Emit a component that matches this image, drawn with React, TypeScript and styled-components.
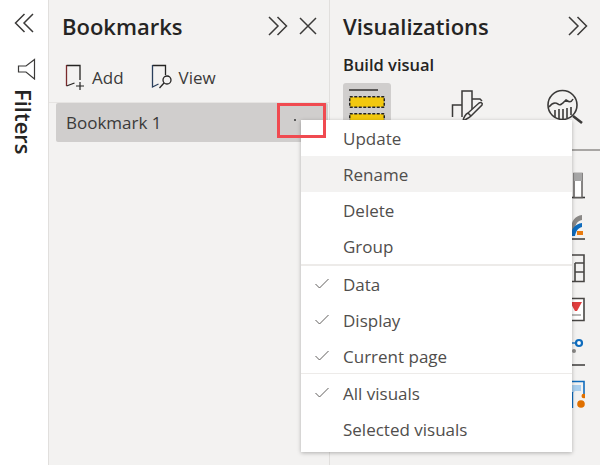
import React from "react";
import styled, { createGlobalStyle } from "styled-components";

const Global = createGlobalStyle`
  html, body { margin: 0; padding: 0; background: #f3f2f1; }
  body { font-family: "Open Sans", "Noto Sans", "Liberation Sans", sans-serif; }
  * { box-sizing: border-box; }
`;

const Page = styled.div`
  position: relative;
  width: 600px;
  height: 465px;
  display: flex;
  overflow: hidden;
  color: #252423;
`;

const FiltersRail = styled.aside`
  width: 49px;
  flex: none;
  background: #fff;
  border-right: 1px solid #e1dfdd;
  display: flex;
  flex-direction: column;
  align-items: center;
  padding-top: 13px;
`;

const RailIcon = styled.svg`
  display: block;
  flex: none;
`;

const FilterGroup = styled.div`
  margin-top: 25px;
  display: flex;
  flex-direction: column;
  align-items: center;
  gap: 9px;
`;

const VerticalLabel = styled.span`
  writing-mode: vertical-rl;
  font-size: 22px;
  font-weight: 600;
  line-height: 24px;
`;

const BookmarksPane = styled.section`
  width: 281px;
  flex: none;
  border-right: 1px solid #e1dfdd;
  display: flex;
  flex-direction: column;
`;

const PaneHeader = styled.header`
  height: 52px;
  display: flex;
  align-items: center;
  gap: 11px;
  padding: 0 12px 0 13px;
`;

const PaneTitle = styled.h2`
  margin: 0;
  flex: 1;
  font-size: 22px;
  font-weight: 600;
  line-height: 28px;
  color: #252423;
`;

const Toolbar = styled.div`
  height: 51px;
  display: flex;
  align-items: center;
  gap: 27px;
  padding: 0 0 0 16px;
  border-bottom: 1px solid #e6e4e2;
`;

const ToolButton = styled.div`
  display: flex;
  align-items: center;
  gap: 7px;
  font-size: 17px;
  color: #3b3a39;
`;

const BookmarkRow = styled.div`
  height: 39px;
  margin: 0 1px 0 7px;
  background: #d0cecd;
  border-radius: 2px;
  display: flex;
  align-items: center;
  justify-content: space-between;
  padding: 0 28px 0 10px;
  font-size: 17px;
  color: #3b3a39;
`;

const Dots = styled.span`
  width: 2px;
  height: 2px;
  background: #333;
  border-radius: 50%;
  margin-right: 4px;
  margin-top: -6px;
`;

const VizPane = styled.section`
  flex: 1;
  min-width: 0;
  display: flex;
  flex-direction: column;
`;

const SubTitle = styled.div`
  font-size: 16.5px;
  font-weight: 600;
  line-height: 22px;
  padding: 0 13px;
  margin-top: 2px;
`;

const BuildTabs = styled.div`
  margin-top: 7px;
  padding: 0 10px 0 13px;
  height: 68px;
  display: flex;
  justify-content: space-between;
  align-items: flex-start;
  border-bottom: 2px solid #a8a6a4;
`;

const BuildTab = styled.div<{ $active?: boolean; $top: number }>`
  width: 48px;
  height: 66px;
  flex: none;
  border-radius: 3px;
  background: ${(p) => (p.$active ? "#d0cecd" : "transparent")};
  display: flex;
  justify-content: center;
  padding-top: ${(p) => p.$top}px;
`;

const Gallery = styled.div`
  display: flex;
  flex-direction: column;
  align-items: flex-end;
  gap: 12px;
  padding: 19px 15px 0 0;
`;

const Menu = styled.div`
  position: absolute;
  left: 301px;
  top: 120px;
  width: 271px;
  height: 332px;
  background: #fff;
  box-shadow: 0 1px 4px rgba(0, 0, 0, 0.28);
`;

const MenuItem = styled.div<{ $hover?: boolean }>`
  height: 36px;
  display: flex;
  align-items: center;
  padding-left: 42px;
  position: relative;
  font-size: 17px;
  color: #504e4c;
  background: ${(p) => (p.$hover ? "#f3f2f1" : "transparent")};
`;

const Check = styled.svg`
  position: absolute;
  left: 14px;
  top: 12px;
`;

const Divider = styled.div<{ $thick?: boolean }>`
  height: ${(p) => (p.$thick ? "2px" : "1px")};
  margin-top: ${(p) => (p.$thick ? "0" : "-1px")};
  margin-bottom: ${(p) => (p.$thick ? "0" : "1px")};
  background: #edebe9;
`;

const Highlight = styled.div`
  position: absolute;
  left: 277px;
  top: 103px;
  width: 49px;
  height: 35px;
  border: 3px solid #f04a50;
  pointer-events: none;
`;

const ChevronsLeft = () => (
  <RailIcon width="20" height="20" viewBox="0 0 20 20" fill="none" stroke="#3b3a39" strokeWidth="1.5">
    <path d="M10.5 1 1.5 10l9 9M19 1l-9 9 9 9" />
  </RailIcon>
);

const ChevronsRight = () => (
  <RailIcon width="20" height="20" viewBox="0 0 20 20" fill="none" stroke="#3b3a39" strokeWidth="1.5">
    <path d="M1 1l9 9-9 9M9.5 1l9 9-9 9" />
  </RailIcon>
);

const FilterIcon = () => (
  <RailIcon width="24" height="22" viewBox="0 0 24 22" fill="none" stroke="#3b3a39" strokeWidth="1.2">
    <path d="M22.5 1.5V21L14 14H6.5V8H14Z" />
  </RailIcon>
);

const CloseIcon = () => (
  <RailIcon width="18" height="18" viewBox="0 0 18 18" fill="none" stroke="#3b3a39" strokeWidth="1.5">
    <path d="M1 1 17 17M17 1 1 17" />
  </RailIcon>
);

const AddIcon = () => (
  <RailIcon width="20" height="26" viewBox="0 0 20 26" fill="none">
    <path d="M1.5 1.5H15V16M1.5 22l8-3" stroke="#252423" strokeWidth="1.3" />
    <path d="M1.5 1v21" stroke="#7a2a2c" strokeWidth="1.3" />
    <path d="M15 18v8M11 22h8" stroke="#252423" strokeWidth="1.2" />
  </RailIcon>
);

const ViewIcon = () => (
  <RailIcon width="21" height="26" viewBox="0 0 21 26" fill="none">
    <path d="M1.5 1.5h13V11" stroke="#252423" strokeWidth="1.3" />
    <path d="M1.5 1v22l6-3" stroke="#2a3f5c" strokeWidth="1.3" />
    <circle cx="16" cy="16" r="4" stroke="#252423" strokeWidth="1.3" />
    <path d="M13 19 8.5 24" stroke="#252423" strokeWidth="1.3" />
  </RailIcon>
);

const BuildIcon = () => (
  <RailIcon width="36" height="50" viewBox="0 0 36 50">
    <path d="M0 3h29" stroke="#3b3a39" strokeWidth="1.6" />
    <rect x="1" y="10" width="34" height="10" fill="#f2c80f" />
    <rect x="0.75" y="9.75" width="34.5" height="10.5" fill="none" stroke="#252423" strokeWidth="1.5" strokeDasharray="3 1.5" />
    <rect x="1" y="27" width="34" height="10" fill="#f2c80f" />
    <rect x="0.75" y="26.75" width="34.5" height="10.5" fill="none" stroke="#252423" strokeWidth="1.5" strokeDasharray="3 1.5" />
  </RailIcon>
);

const FormatIcon = () => (
  <RailIcon width="36" height="36" viewBox="0 0 36 36" fill="none" stroke="#3b3a39" strokeWidth="1.5">
    <path d="M3.5 28V16H13M13 28V2h10v24M23 10h8l2 2" />
    <path d="M14 32c1-5 3-7 5-8l11-10c2-1 4 0 3 2L22 27c-2 2-5 3-8 5Z" fill="#f3f2f1" />
    <path d="M22 27l-3-3" />
  </RailIcon>
);

const AnalyticsIcon = () => (
  <RailIcon width="38" height="38" viewBox="0 0 38 38" fill="none" stroke="#3b3a39" strokeWidth="1.6">
    <circle cx="15.5" cy="16" r="14.5" />
    <path d="M2 18c3-4 6-5 9-3 2 2 4 0 8-4 3 2 5 3 7-1" />
    <path d="M8 21v7M12 20v10M16 20v10M20 19v10M24 18v8" />
    <path d="M26 27 35 34" strokeWidth="2.6" />
  </RailIcon>
);

const IconSvg = styled.svg`
  display: block;
  flex: none;
`;

const Tile = ({ children }: { children: React.ReactNode }) => (
  <IconSvg width="30" height="30" viewBox="0 0 30 30" fill="none">
    {children}
  </IconSvg>
);

const CheckMark = () => (
  <Check width="14" height="12" viewBox="0 0 14 12" fill="none" stroke="#605e5c" strokeWidth="1">
    <path d="M0.5 6l4 4 9-9" />
  </Check>
);

export default function App() {
  return (
    <Page>
      <Global />
      <FiltersRail>
        <ChevronsLeft />
        <FilterGroup>
          <FilterIcon />
          <VerticalLabel>Filters</VerticalLabel>
        </FilterGroup>
      </FiltersRail>

      <BookmarksPane>
        <PaneHeader>
          <PaneTitle>Bookmarks</PaneTitle>
          <ChevronsRight />
          <CloseIcon />
        </PaneHeader>
        <Toolbar>
          <ToolButton>
            <AddIcon />
            Add
          </ToolButton>
          <ToolButton>
            <ViewIcon />
            View
          </ToolButton>
        </Toolbar>
        <BookmarkRow>
          Bookmark 1
          <Dots />
        </BookmarkRow>
      </BookmarksPane>

      <VizPane>
        <PaneHeader>
          <PaneTitle>Visualizations</PaneTitle>
          <ChevronsRight />
        </PaneHeader>
        <SubTitle>Build visual</SubTitle>
        <BuildTabs>
          <BuildTab $active $top={4}>
            <BuildIcon />
          </BuildTab>
          <BuildTab $top={6}>
            <FormatIcon />
          </BuildTab>
          <BuildTab $top={6}>
            <AnalyticsIcon />
          </BuildTab>
        </BuildTabs>
        <Gallery>
          <Tile>
            <path d="M15 27.5h15" stroke="#3b3a39" strokeWidth="1.6" />
            <rect x="19" y="3.5" width="8" height="24" fill="#fff" stroke="#605e5c" strokeWidth="1.5" />
            <rect x="19" y="3" width="8" height="8" fill="#a6a6a6" />
          </Tile>
          <Tile>
            <path d="M16 18c0-9 4-14 11-15v5c-5 1-7 5-7 10Z" fill="#8a8886" />
            <path d="M16 24c0-7 4-12 11-13v4c-4 1-6 4-7 9Z" fill="#0f6cbd" />
            <rect x="22" y="19" width="6" height="4" fill="#e97b0f" />
            <path d="M16 27h14" stroke="#3b3a39" strokeWidth="1.5" />
          </Tile>
          <Tile>
            <path d="M15 1h14v26.5H15M20 9v18.5M20 9h9M20 18h9" stroke="#484644" strokeWidth="1.6" />
          </Tile>
          <Tile>
            <path d="M15 2.5h14v22H15" stroke="#484644" strokeWidth="1.6" fill="#fff" />
            <path d="M15 6h12l-5 9h-2Z" fill="#e03e3e" />
            <path d="M15 19h11" stroke="#8a8886" strokeWidth="1.2" />
          </Tile>
          <Tile>
            <circle cx="24" cy="5" r="3" fill="#fff" stroke="#0f6cbd" strokeWidth="2.2" />
            <path d="M16 5h6" stroke="#0f6cbd" strokeWidth="1.4" />
            <circle cx="19" cy="13" r="2" fill="#8a8886" />
            <path d="M16 27h14" stroke="#3b3a39" strokeWidth="1.5" />
          </Tile>
          <Tile>
            <path d="M14 1.5h15V14" stroke="#0f6cbd" strokeWidth="1.6" />
            <path d="M14 5h12v6h-6l-3 3h-3Z" fill="#a9cfee" />
            <path d="M17.5 12v16" stroke="#0f6cbd" strokeWidth="1.4" />
            <circle cx="28.7" cy="16" r="2.2" fill="#e07000" />
            <circle cx="26" cy="24" r="3.8" fill="#e07000" />
          </Tile>
        </Gallery>
      </VizPane>

      <Menu>
        <MenuItem>Update</MenuItem>
        <MenuItem $hover>Rename</MenuItem>
        <MenuItem>Delete</MenuItem>
        <MenuItem>Group</MenuItem>
        <Divider $thick />
        {["Data", "Display", "Current page"].map((t) => (
          <MenuItem key={t}>
            <CheckMark />
            {t}
          </MenuItem>
        ))}
        <Divider />
        <MenuItem>
          <CheckMark />
          All visuals
        </MenuItem>
        <MenuItem>Selected visuals</MenuItem>
      </Menu>

      <Highlight />
    </Page>
  );
}
